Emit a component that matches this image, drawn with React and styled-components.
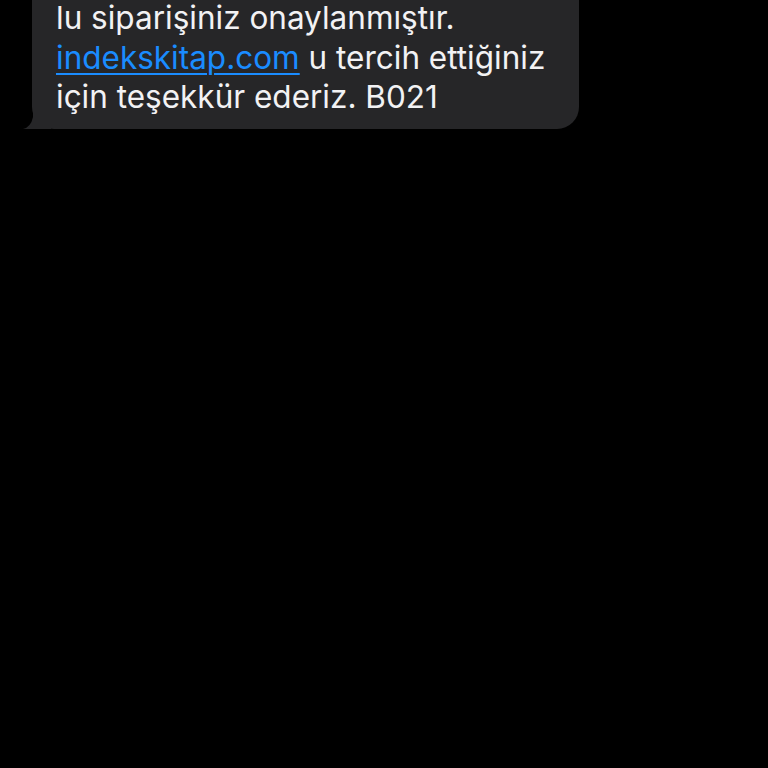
import React from "react";
import styled, { createGlobalStyle } from "styled-components";

const Global = createGlobalStyle`
  html, body { margin: 0; padding: 0; background: #000; }
  body { width: 768px; height: 768px; overflow: hidden; }
`;

const Screen = styled.div`
  width: 768px;
  height: 768px;
  background: #000;
  display: flex;
  flex-direction: column;
  align-items: flex-start;
  padding-left: 32px;
  box-sizing: border-box;
  overflow: hidden;
`;

const Bubble = styled.div`
  position: relative;
  width: 547px;
  box-sizing: border-box;
  margin-top: -40px;
  padding: 38px 20px 12px 24px;
  background: #262628;
  border-radius: 22px;
  color: #f2f2f4;
  font-family: Inter, "Noto Sans", sans-serif;
  font-size: 31.5px;
  line-height: 39.5px;
`;

const Tail = styled.svg`
  position: absolute;
  left: -11px;
  bottom: 0;
  width: 30px;
  height: 22px;
`;

const Line = styled.div`
  white-space: nowrap;
`;

const Link = styled.a`
  color: #1a8cff;
  text-decoration: underline;
  text-decoration-thickness: 2px;
  text-underline-offset: 4px;
`;

export default function App() {
  return (
    <>
      <Global />
      <Screen>
        <Bubble>
          <Tail viewBox="0 0 30 22">
            <path d="M12 0 L30 0 L30 22 L2 22 Q10 20 12 10 Z" fill="#262628" />
          </Tail>
          <Line>lu siparişiniz onaylanmıştır.</Line>
          <Line>
            <Link>indekskitap.com</Link> u tercih ettiğiniz
          </Line>
          <Line>için teşekkür ederiz. B021</Line>
        </Bubble>
      </Screen>
    </>
  );
}
